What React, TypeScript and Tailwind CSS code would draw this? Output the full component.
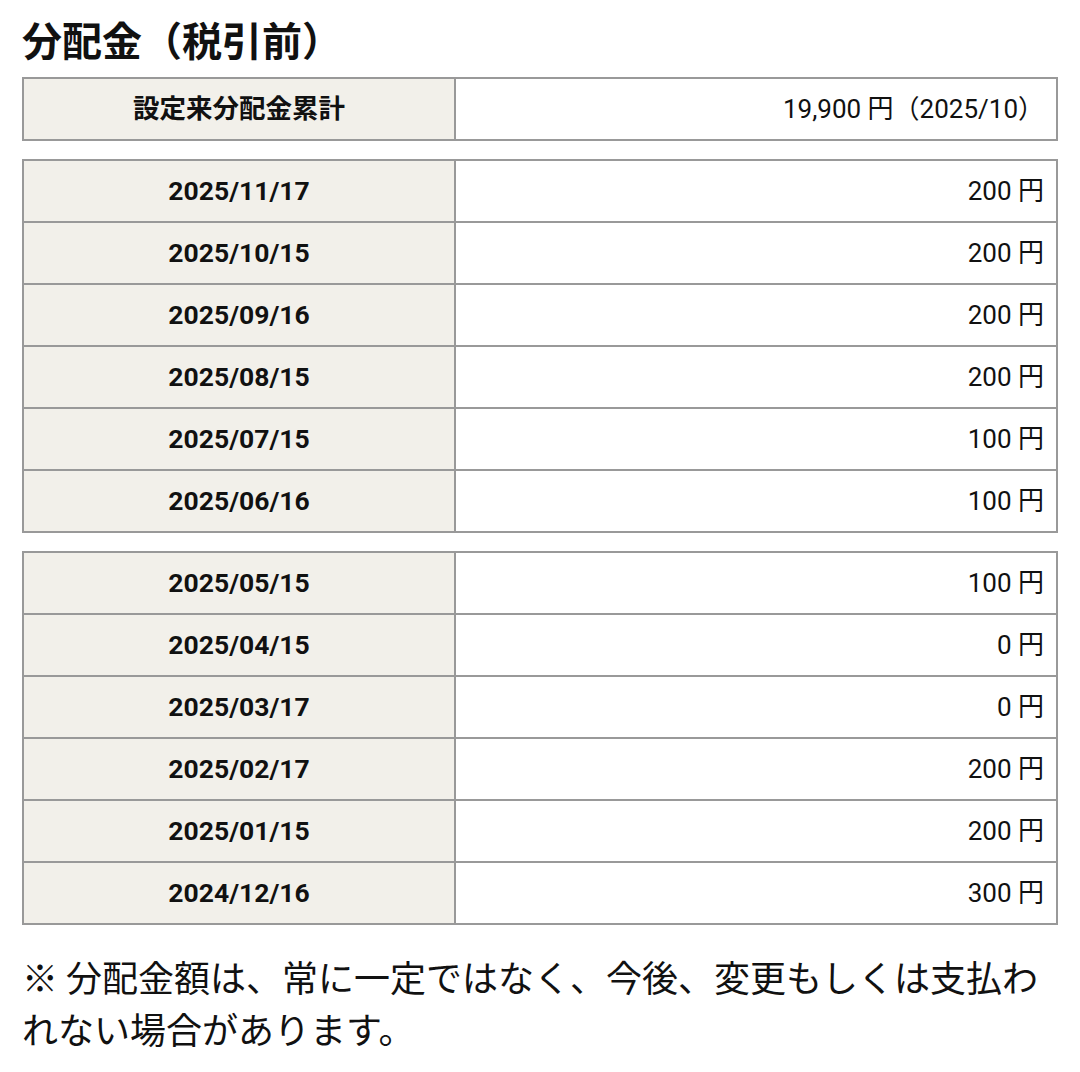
import React from 'react';

type Row = { date: string; amount: string };

const groups: Row[][] = [
  [
    { date: '2025/11/17', amount: '200' },
    { date: '2025/10/15', amount: '200' },
    { date: '2025/09/16', amount: '200' },
    { date: '2025/08/15', amount: '200' },
    { date: '2025/07/15', amount: '100' },
    { date: '2025/06/16', amount: '100' },
  ],
  [
    { date: '2025/05/15', amount: '100' },
    { date: '2025/04/15', amount: '0' },
    { date: '2025/03/17', amount: '0' },
    { date: '2025/02/17', amount: '200' },
    { date: '2025/01/15', amount: '200' },
    { date: '2024/12/16', amount: '300' },
  ],
];

const thClass =
  'w-[432px] h-[62px] border-2 border-[#999] bg-[#f2f0ea] text-center font-bold text-[#111] text-[26.5px]';
const tdClass = 'h-[62px] border-2 border-[#999] bg-white text-right pr-3 text-[26px] text-[#111]';

const App = () => {
  return (
    <div className="w-[1080px] bg-white px-[22px] pt-[19px] font-['Roboto','Noto_Sans_CJK_JP',sans-serif]">
      <h2 className="text-[40px] leading-[48px] font-bold text-[#111]">分配金（税引前）</h2>

      <table className="mt-[10px] w-full border-collapse">
        <tbody>
          <tr>
            <th className={thClass}>設定来分配金累計</th>
            <td className={tdClass}>19,900 円（2025/10）</td>
          </tr>
        </tbody>
      </table>

      {groups.map((rows, i) => (
        <table className="mt-[18px] w-full border-collapse" key={i}>
          <tbody>
            {rows.map((row) => (
              <tr key={row.date}>
                <th className={thClass}>{row.date}</th>
                <td className={tdClass}>{row.amount} 円</td>
              </tr>
            ))}
          </tbody>
        </table>
      ))}

      <p className="mt-[25px] text-[36px] leading-[52px] text-[#111] font-['Noto_Sans_CJK_JP',sans-serif]">
        ※ 分配金額は、常に一定ではなく、今後、変更もしくは支払われない場合があります。
      </p>
    </div>
  );
};

export default App;
